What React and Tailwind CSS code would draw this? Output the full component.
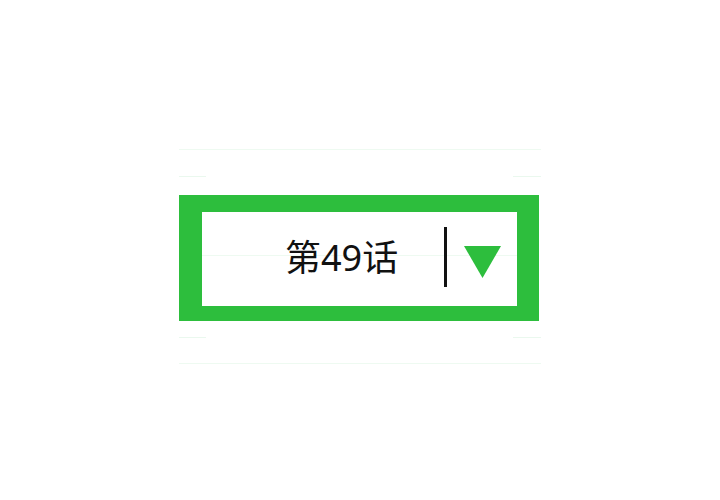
export default function App() {
  return (
    <div className="min-h-[500px] w-full bg-white pt-[149px]">
      <div className="mx-auto flex w-[362px] flex-col">
        <div className="h-px bg-[#eefaf1]" />
        <div className="mt-[26px] flex h-px justify-between">
          <div className="w-[27px] bg-[#eaf8ee]" />
          <div className="w-[28px] bg-[#eaf8ee]" />
        </div>
        <div className="mt-[18px] w-[360px] border-[#2dbe3d] border-t-[17px] border-l-[23px] border-r-[22px] border-b-[15px]">
          <div className="flex h-[94px] bg-white bg-[linear-gradient(to_bottom,transparent_43px,#eefaf1_43px,#eefaf1_44px,transparent_44px)] pl-[83px]">
            <div
              className="mt-[24px] w-[159px] text-[36px] leading-[44px] text-[#111]"
              style={{ fontFamily: '"Noto Sans", "Noto Sans CJK SC", sans-serif' }}
            >
              第49话
            </div>
            <div className="mt-[15px] h-[60px] w-[3px] bg-[#111]" />
            <svg className="ml-[17px] mt-[34px]" width="37" height="32" viewBox="0 0 37 32">
              <polygon points="0,0 37,0 18.5,32" fill="#2dbe3d" />
            </svg>
          </div>
        </div>
        <div className="mt-[16px] flex h-px justify-between">
          <div className="w-[27px] bg-[#eaf8ee]" />
          <div className="w-[28px] bg-[#eaf8ee]" />
        </div>
        <div className="mt-[25px] h-px bg-[#eefaf1]" />
      </div>
    </div>
  );
}
